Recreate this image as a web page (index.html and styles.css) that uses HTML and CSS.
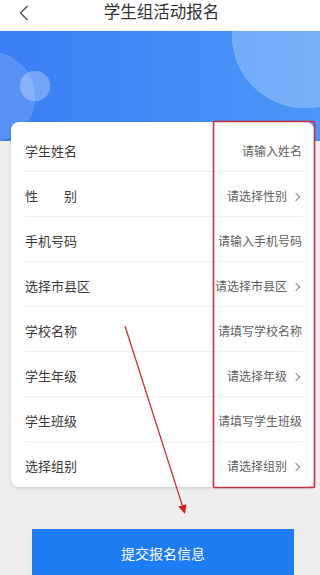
FILE: index.html
```html
<!DOCTYPE html>
<html lang="zh-CN">
<head>
  <meta charset="UTF-8">
  <meta name="viewport" content="width=device-width, initial-scale=1.0">
  <title>学生组活动报名</title>
  <link rel="stylesheet" href="styles.css">
</head>
<body>
  <div class="header">
    <svg class="back" width="10" height="16" viewBox="0 0 10 16">
      <polyline points="8.5,1 1.5,8 8.5,15" fill="none" stroke="#555" stroke-width="1.4"/>
    </svg>
    <div class="title">学生组活动报名</div>
  </div>

  <div class="banner"></div>

  <div class="card">
    <div class="row">
      <span class="label">学生姓名</span>
      <span class="value">请输入姓名</span>
    </div>
    <div class="row">
      <span class="label gender">性别</span>
      <span class="value select">请选择性别</span>
    </div>
    <div class="row">
      <span class="label">手机号码</span>
      <span class="value">请输入手机号码</span>
    </div>
    <div class="row">
      <span class="label">选择市县区</span>
      <span class="value select">请选择市县区</span>
    </div>
    <div class="row">
      <span class="label">学校名称</span>
      <span class="value">请填写学校名称</span>
    </div>
    <div class="row">
      <span class="label">学生年级</span>
      <span class="value select">请选择年级</span>
    </div>
    <div class="row">
      <span class="label">学生班级</span>
      <span class="value">请填写学生班级</span>
    </div>
    <div class="row last">
      <span class="label">选择组别</span>
      <span class="value select">请选择组别</span>
    </div>
  </div>

  <button class="submit">提交报名信息</button>

  <!-- annotation marks over the screenshot -->
  <svg class="marks" width="320" height="575" viewBox="0 0 320 575">
    <rect x="213.5" y="121.5" width="101" height="366" rx="1" fill="none" stroke="#c8303f" stroke-width="1.6"/>
    <line x1="125" y1="326" x2="182.3" y2="505.4" stroke="#c8303f" stroke-width="1.3"/>
    <polygon points="185,514 186.4,504.2 178.4,506.6" fill="#d41c1c"/>
  </svg>
</body>
</html>
```

FILE: styles.css
```css
body {
  margin: 0;
  height: 575px;
  overflow: hidden;
  position: relative;
  background: #eeeeee;
  font-family: "Noto Sans CJK SC", "Noto Sans", sans-serif;
}

.header {
  height: 31px;
  background: #ffffff;
  position: relative;
  border-bottom: 1px solid #f2f2f2;
  box-sizing: border-box;
}

.back {
  position: absolute;
  left: 19px;
  top: 5px;
}

.title {
  text-align: center;
  font-size: 16.5px;
  line-height: 22px;
  color: #333;
  padding-left: 3px;
}

.banner {
  height: 110px;
  background:
    radial-gradient(circle at 305px 4px, rgba(255, 255, 255, 0.25) 73px, transparent 73.5px),
    radial-gradient(circle at 35px 55px, rgba(255, 255, 255, 0.28) 15px, transparent 15.5px),
    radial-gradient(circle at -10px 66px, rgba(255, 255, 255, 0.14) 45px, transparent 45.5px),
    linear-gradient(90deg, #3a7ff5, #4b96f7);
}

.card {
  margin: -19px 0 0 11px;
  width: 303px;
  padding-top: 5px;
  background: #ffffff;
  border-radius: 8px;
  box-shadow: 0 1px 3px rgba(0, 0, 0, 0.15);
  position: relative;
}

.row {
  height: 45px;
  margin: 0 12px 0 14px;
  display: flex;
  align-items: center;
  justify-content: space-between;
  border-bottom: 1px solid #efefef;
  box-sizing: border-box;
  padding-top: 2px;
}

.row.last {
  border-bottom: none;
}

.label {
  font-size: 13px;
  color: #3a3a3a;
}

.label.gender {
  width: 52px;
  text-align: justify;
  text-align-last: justify;
}

.value {
  font-size: 12px;
  color: #5e5e5e;
}

.value.select::after {
  content: "";
  display: inline-block;
  width: 5px;
  height: 5px;
  border-top: 1px solid #888;
  border-right: 1px solid #888;
  transform: rotate(45deg);
  margin: 0 3px 1px 6px;
}

.submit {
  display: block;
  margin: 42px 0 0 32px;
  width: 262px;
  height: 50px;
  border: none;
  background: #1e7cf5;
  color: #fff;
  font-family: inherit;
  font-size: 14px;
  padding-bottom: 4px;
}

.marks {
  position: absolute;
  left: 0;
  top: 0;
  pointer-events: none;
}
```
